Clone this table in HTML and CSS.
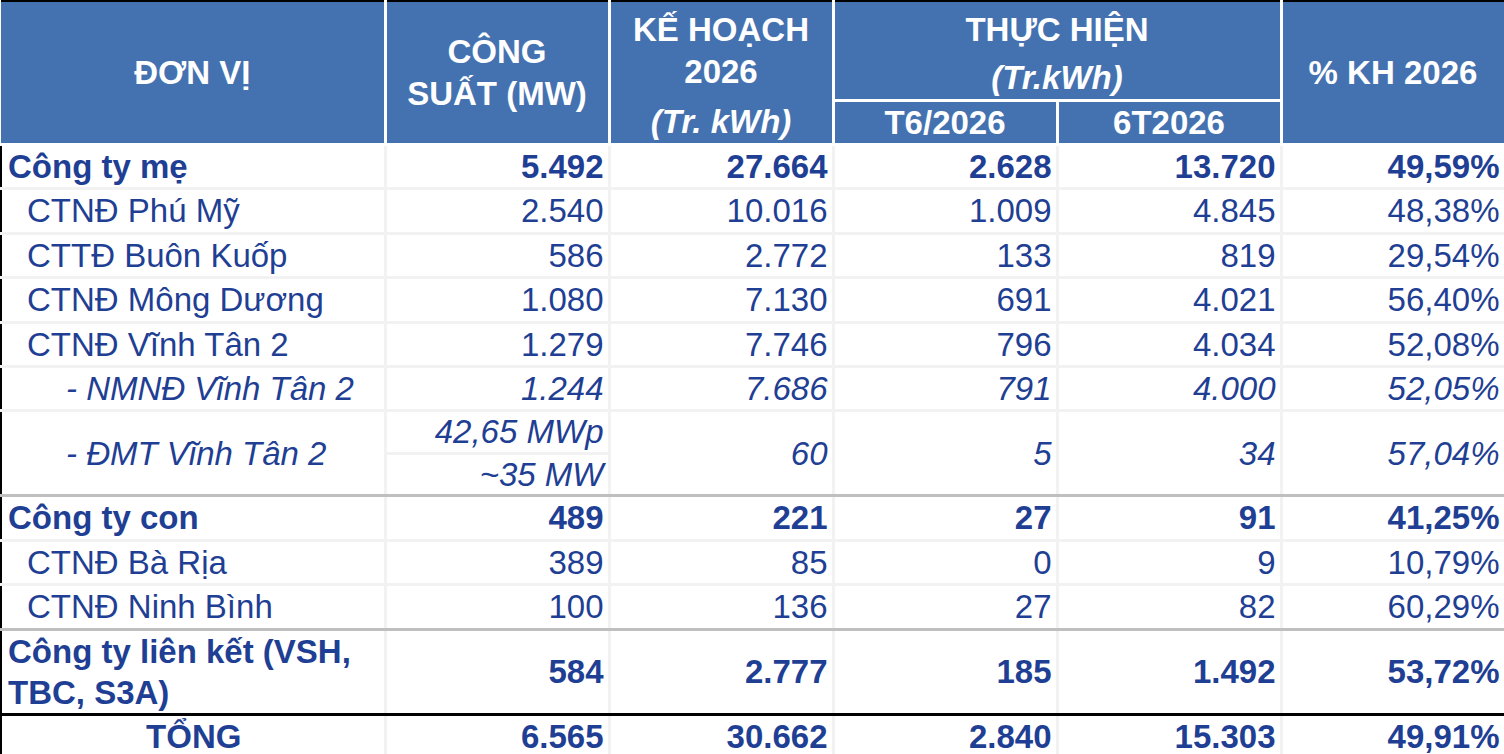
FILE: index.html
```html
<!DOCTYPE html>
<html lang="vi">
<head>
<meta charset="utf-8">
<title>Sản lượng điện 6T2026</title>
<link rel="stylesheet" href="styles.css">
</head>
<body>
<table class="sheet">
  <colgroup>
    <col class="c-name">
    <col class="c-num">
    <col class="c-num">
    <col class="c-num">
    <col class="c-num">
    <col class="c-last">
  </colgroup>
  <thead>
    <tr class="h1">
      <th rowspan="2">ĐƠN VỊ</th>
      <th rowspan="2"><span class="ln">CÔNG</span><span class="ln">SUẤT (MW)</span></th>
      <th rowspan="2" class="th-plan"><span class="ln">KẾ HOẠCH</span><span class="ln">2026</span><span class="ln it gap">(Tr. kWh)</span></th>
      <th colspan="2" class="th-group"><span class="ln">THỰC HIỆN</span><span class="ln it gap2">(Tr.kWh)</span></th>
      <th rowspan="2">% KH 2026</th>
    </tr>
    <tr class="h2">
      <th>T6/2026</th>
      <th>6T2026</th>
    </tr>
  </thead>
  <tbody>
    <tr class="grp">
      <td class="name">Công ty mẹ</td><td>5.492</td><td>27.664</td><td>2.628</td><td>13.720</td><td>49,59%</td>
    </tr>
    <tr>
      <td class="name sub">CTNĐ Phú Mỹ</td><td>2.540</td><td>10.016</td><td>1.009</td><td>4.845</td><td>48,38%</td>
    </tr>
    <tr>
      <td class="name sub">CTTĐ Buôn Kuốp</td><td>586</td><td>2.772</td><td>133</td><td>819</td><td>29,54%</td>
    </tr>
    <tr>
      <td class="name sub">CTNĐ Mông Dương</td><td>1.080</td><td>7.130</td><td>691</td><td>4.021</td><td>56,40%</td>
    </tr>
    <tr>
      <td class="name sub">CTNĐ Vĩnh Tân 2</td><td>1.279</td><td>7.746</td><td>796</td><td>4.034</td><td>52,08%</td>
    </tr>
    <tr class="ital">
      <td class="name subsub">- NMNĐ Vĩnh Tân 2</td><td>1.244</td><td>7.686</td><td>791</td><td>4.000</td><td>52,05%</td>
    </tr>
    <tr class="ital half">
      <td class="name subsub bb-gray" rowspan="2">- ĐMT Vĩnh Tân 2</td><td>42,65 MWp</td><td class="bb-gray" rowspan="2">60</td><td class="bb-gray" rowspan="2">5</td><td class="bb-gray" rowspan="2">34</td><td class="bb-gray" rowspan="2">57,04%</td>
    </tr>
    <tr class="ital half">
      <td class="bb-gray">~35 MW</td>
    </tr>
    <tr class="grp">
      <td class="name">Công ty con</td><td>489</td><td>221</td><td>27</td><td>91</td><td>41,25%</td>
    </tr>
    <tr>
      <td class="name sub">CTNĐ Bà Rịa</td><td>389</td><td>85</td><td>0</td><td>9</td><td>10,79%</td>
    </tr>
    <tr class="row-bb-gray">
      <td class="name sub">CTNĐ Ninh Bình</td><td>100</td><td>136</td><td>27</td><td>82</td><td>60,29%</td>
    </tr>
    <tr class="grp row-bb-black">
      <td class="name">Công ty liên kết (VSH,<br>TBC, S3A)</td><td>584</td><td>2.777</td><td>185</td><td>1.492</td><td>53,72%</td>
    </tr>
    <tr class="grp">
      <td class="name center">TỔNG</td><td>6.565</td><td>30.662</td><td>2.840</td><td>15.303</td><td>49,91%</td>
    </tr>
  </tbody>
</table>
</body>
</html>
```

FILE: styles.css
```css
html, body {
  margin: 0;
  padding: 0;
  background: #ffffff;
  overflow: hidden;
}

.sheet {
  border-collapse: collapse;
  table-layout: fixed;
  width: 1504px;
  font-family: "Liberation Sans", Arial, sans-serif;
  font-size: 33px;
  color: #1f3f94;
  border-top: 2px solid #000;
}

.c-name { width: 384px; }
.c-num { width: 224px; }
.c-last { width: 224px; }

.sheet th {
  background: #4472b0;
  color: #ffffff;
  font-weight: bold;
  border: 3px solid #ffffff;
  border-top: 0;
  padding: 0;
  text-align: center;
  vertical-align: middle;
  line-height: 42px;
}

.sheet th:first-child { border-left: 0; }

.h1 th { height: 95px; }
.sheet th.th-plan {
  vertical-align: top;
  padding-top: 7px;
  height: auto;
}
.sheet th.th-group {
  vertical-align: top;
  padding-top: 7px;
  height: 88px;
}
.h2 th { height: 40px; line-height: 40px; padding-top: 1px; }

.ln { display: block; }
.it { font-style: italic; }
.gap { margin-top: 8px; }
.gap2 { margin-top: 6px; }

.sheet td {
  border: 3px solid #f2f2f2;
  padding: 0 4px 0 6px;
  text-align: right;
  vertical-align: middle;
  line-height: 41.4px;
  white-space: nowrap;
}

.sheet td.name {
  text-align: left;
  border-left: 2px solid #000;
  padding-left: 6px;
}

.sheet td.sub { padding-left: 25px; }
.sheet td.subsub { padding-left: 64px; }
.sheet td.center { text-align: center; }

.grp td { font-weight: bold; }
.ital td { font-style: italic; }
.half td { line-height: 39.5px; }

.sheet td.bb-gray,
.row-bb-gray td { border-bottom-color: #bfbfbf; }
.row-bb-black td { border-bottom-color: #000000; }
```
